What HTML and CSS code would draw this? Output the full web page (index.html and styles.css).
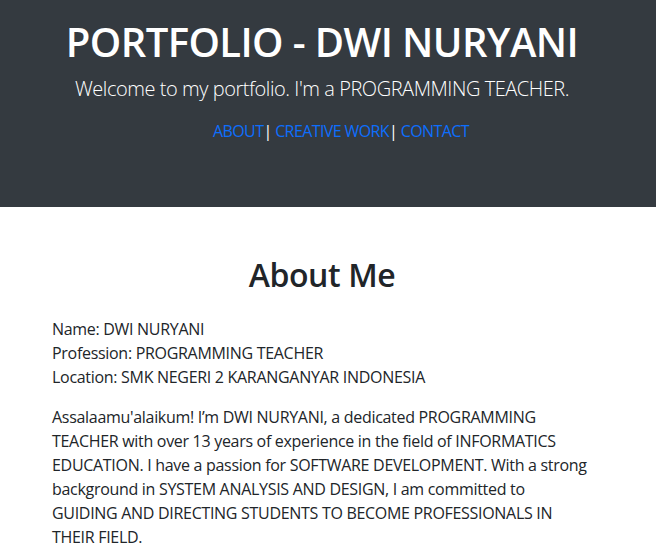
FILE: index.html
```html
<!DOCTYPE html>
<html lang="en">
<head>
<meta charset="utf-8">
<title>Portfolio - DWI NURYANI</title>
<link rel="stylesheet" href="styles.css">
</head>
<body>
<header class="hero">
  <h1 class="hero-title">PORTFOLIO - DWI NURYANI</h1>
  <p class="hero-lead">Welcome to my portfolio. I'm a PROGRAMMING TEACHER.</p>
  <nav class="hero-nav"><a href="#about">ABOUT</a>| <a href="#work">CREATIVE WORK</a>| <a href="#contact">CONTACT</a></nav>
</header>
<main class="content">
  <section id="about" class="about">
    <h2 class="about-title">About Me</h2>
    <p class="about-facts">Name: DWI NURYANI<br>Profession: PROGRAMMING TEACHER<br>Location: SMK NEGERI 2 KARANGANYAR INDONESIA</p>
    <p class="about-text">Assalaamu'alaikum! I’m DWI NURYANI, a dedicated PROGRAMMING TEACHER with over 13 years of experience in the field of INFORMATICS EDUCATION. I have a passion for SOFTWARE DEVELOPMENT. With a strong background in SYSTEM ANALYSIS AND DESIGN, I am committed to GUIDING AND DIRECTING STUDENTS TO BECOME PROFESSIONALS IN THEIR FIELD.</p>
  </section>
</main>
</body>
</html>
```
FILE: styles.css
```css
html, body {
  margin: 0;
  padding: 0;
}
body {
  font-family: "Open Sans", "Noto Sans", sans-serif;
  font-size: 16px;
  line-height: 1.5;
  letter-spacing: -0.3px;
  color: #212529;
  background: #fff;
}
.hero {
  background: #343a40;
  color: #fff;
  text-align: center;
  height: 207px;
  box-sizing: border-box;
  padding: 18px 12px 0 0;
}
.hero-title {
  margin: 0;
  font-size: 40px;
  font-weight: 600;
  line-height: 1.2;
  letter-spacing: -0.6px;
}
.hero-lead {
  margin: 8px 0 0;
  font-size: 20px;
  font-weight: 300;
  line-height: 1.5;
  letter-spacing: -0.45px;
}
.hero-nav {
  margin: 15px 0 0;
  padding-left: 38px;
  font-size: 16px;
  line-height: 1.5;
  letter-spacing: -0.6px;
}
.hero-nav a {
  color: #0d6efd;
  text-decoration: none;
}
.content {
  width: 540px;
  padding: 49px 0 0 52px;
}
.about-title {
  margin: 0 0 23px;
  text-align: center;
  font-size: 32px;
  font-weight: 600;
  line-height: 1.2;
  letter-spacing: -0.4px;
}
.about-facts,
.about-text {
  margin: 0 0 16px;
}
```
